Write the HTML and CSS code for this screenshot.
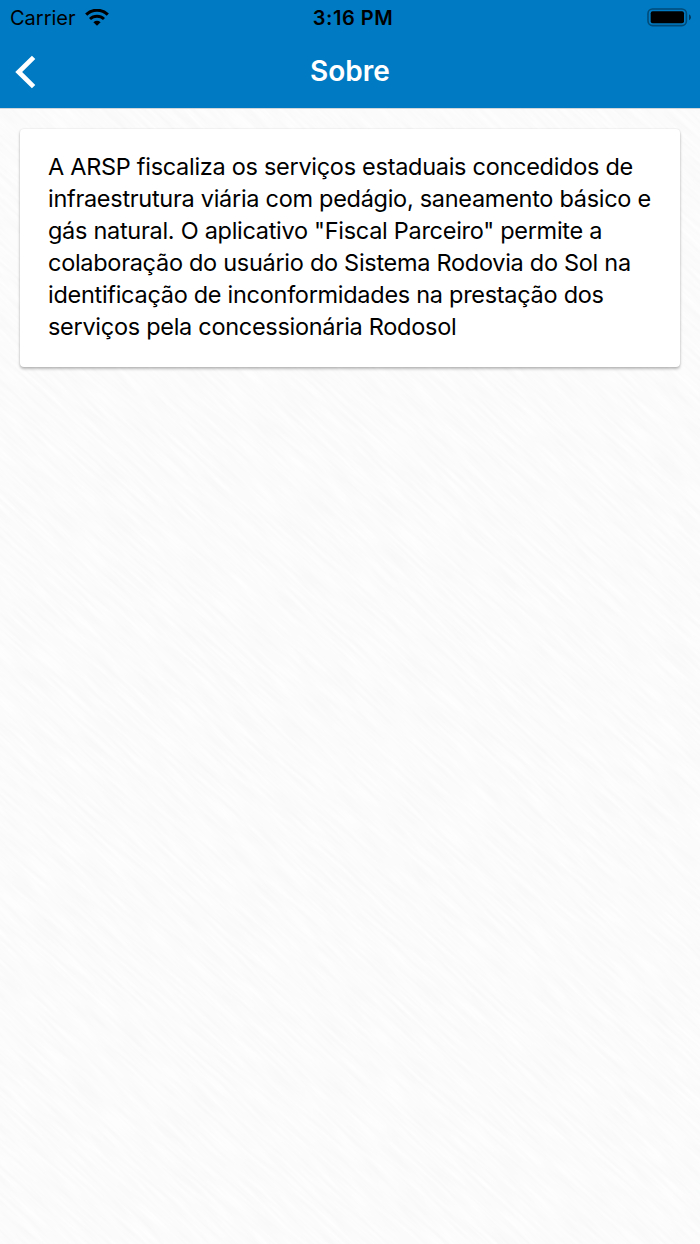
FILE: index.html
```
<!DOCTYPE html>
<html lang="pt-BR">
<head>
    <meta charset="UTF-8">
    <meta name="viewport" content="width=device-width, initial-scale=1.0">
    <title>Sobre</title>
    <link rel="stylesheet" href="styles.css">
</head>
<body>

<svg class="texture" width="700" height="1244" aria-hidden="true">
    <filter id="paper" x="0" y="0" width="100%" height="100%" color-interpolation-filters="sRGB">
        <feTurbulence type="fractalNoise" baseFrequency="0.022 0.3" numOctaves="2" seed="4"/>
        <feColorMatrix values="0.036 0 0 0 0.967  0.036 0 0 0 0.967  0.036 0 0 0 0.967  0 0 0 0 1"/>
    </filter>
    <g transform="rotate(43 350 622)">
        <rect x="-500" y="-300" width="1700" height="1850" filter="url(#paper)"/>
    </g>
</svg>

<header class="header">
    <div class="status-bar">
        <div class="network">
            <span class="carrier">Carrier</span>
            <svg class="wifi" width="24" height="18" viewBox="0 0 24 18">
                <path d="M1.2 5.6 A15.6 15.6 0 0 1 22.8 5.6" fill="none" stroke="#000" stroke-width="3.1"/>
                <path d="M5 10 A10.2 10.2 0 0 1 19 10" fill="none" stroke="#000" stroke-width="2.9"/>
                <path d="M8.4 13.2 A6 6 0 0 1 15.6 13.2 L12 16.8 Z"/>
            </svg>
        </div>
        <span class="time">3:16 PM</span>
        <svg class="battery" width="44" height="20" viewBox="0 0 44 20">
            <rect x="1" y="1" width="38.4" height="16.6" rx="4.5" fill="none" stroke="#004b78" stroke-width="1.6"/>
            <rect x="3.7" y="3.3" width="33.3" height="12" rx="2" fill="#000"/>
            <path d="M42 6.3 Q44 7.3 44 9.3 T42 12.3 Z" fill="#003a60"/>
        </svg>
    </div>
    <div class="toolbar">
        <a class="back" href="#" aria-label="Voltar">
            <svg width="22" height="34" viewBox="0 0 22 34">
                <path d="M18.6 2.4 L3.7 17 L18.6 31.6" fill="none" stroke="#fff" stroke-width="4.8"/>
            </svg>
        </a>
        <h1>Sobre</h1>
    </div>
</header>

<main class="content">
    <div class="card">
        <p>A ARSP fiscaliza os serviços estaduais concedidos de<br>
        infraestrutura viária com pedágio, saneamento básico e<br>
        gás natural. O aplicativo "Fiscal Parceiro" permite a<br>
        colaboração do usuário do Sistema Rodovia do Sol na<br>
        identificação de inconformidades na prestação dos<br>
        serviços pela concessionária Rodosol</p>
    </div>
</main>

</body>
</html>
```

FILE: styles.css
```
body {
    font-family: Inter, "Liberation Sans", sans-serif;
    background-color: #fbfbfb;
    margin: 0;
    color: #000;
    height: 1244px;
    overflow: hidden;
}
.texture {
    position: absolute;
    top: 0;
    left: 0;
    z-index: -1;
}
.header {
    height: 108px;
    background-color: #007ac2;
    box-shadow: 0 1px 0 #d0d6da;
}
.status-bar {
    display: grid;
    grid-template-columns: 1fr auto 1fr;
    align-items: center;
    height: 35px;
    padding: 0 9px 0 10px;
}
.network {
    display: flex;
    align-items: center;
    gap: 9px;
}
.carrier {
    font-size: 20px;
    line-height: 25px;
    padding-top: 2px;
}
.wifi {
    display: block;
}
.time {
    font-size: 20px;
    font-weight: 600;
    line-height: 25px;
    letter-spacing: 0.55px;
    margin-left: 5px;
    padding-top: 2px;
}
.battery {
    justify-self: end;
}
.toolbar {
    display: grid;
    grid-template-columns: 60px 1fr 60px;
    align-items: center;
    height: 73px;
}
.back {
    display: flex;
    padding-left: 15px;
}
h1 {
    margin: 0;
    padding-bottom: 2px;
    font-size: 28px;
    font-weight: 600;
    line-height: 36px;
    text-align: center;
    color: #fff;
}
.content {
    padding: 20.5px 20px;
}
.card {
    background: #fff;
    padding: 22px 28px 24px;
    border-radius: 4px;
    box-shadow: 0 2px 3px rgba(0, 0, 0, 0.26), 0 0 2px rgba(0, 0, 0, 0.12);
}
.card p {
    margin: 0;
    font-size: 23.5px;
    line-height: 32px;
    letter-spacing: -0.29px;
    white-space: nowrap;
}
```
